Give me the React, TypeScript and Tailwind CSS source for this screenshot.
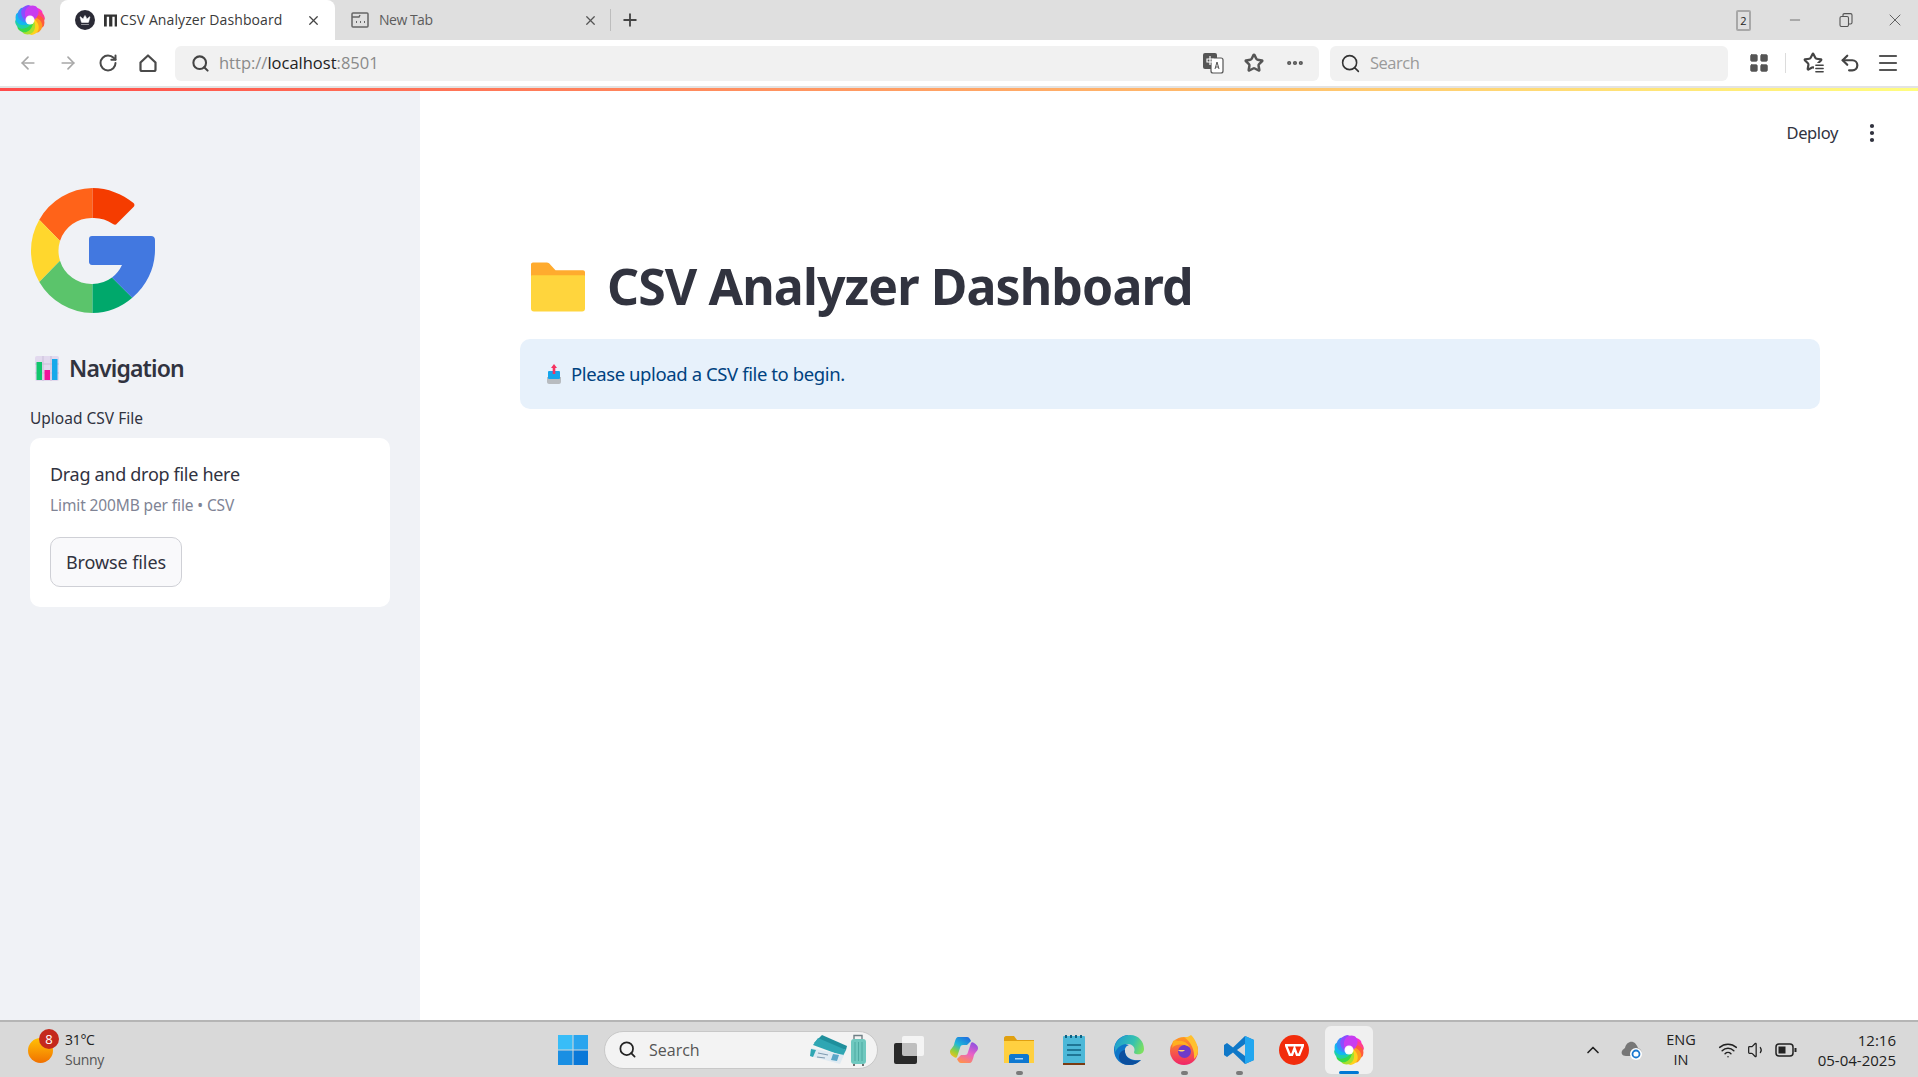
import {
  ArrowLeft,
  ArrowRight,
  ChevronUp,
  Crown,
  Ellipsis,
  EllipsisVertical,
  LayoutGrid,
  Menu,
  Minus,
  Plus,
  RotateCw,
  Search,
  Star,
  Undo2,
  Volume1,
  Wifi,
  X,
} from "lucide-react";

const swirlColors = [
  "#ff2bd0",
  "#ff3f8c",
  "#ff5a3c",
  "#ff9a20",
  "#ffd21c",
  "#a8e02c",
  "#38d94a",
  "#20d0a8",
  "#12b8f0",
  "#3a8cf8",
  "#8a4dff",
  "#c83cf0",
];

function SwirlLogo({ className }: { className: string }) {
  return (
    <svg viewBox="-16 -16 32 32" className={className}>
      {swirlColors.map((color, i) => (
        <path
          key={color}
          d="M-3 -3C-2 -11 6 -16 12 -9C14 -4 10 1 4 2C5 -2 2 -5 -3 -3Z"
          fill={color}
          transform={`rotate(${i * 30})`}
        />
      ))}
      <circle r="4.500" fill="#fff" opacity="0.95" />
    </svg>
  );
}

function GoogleLogo() {
  return (
    <svg viewBox="0 0 125 125" className="w-[125px] h-[125px] block">
      <path d="M62.5 0A62.5 62.5 0 0 0 9.3 31.7L30 53A33 33 0 0 1 62.5 30Z" fill="#ff6319" />
      <path d="M62.5 0C78 0 92 6 103.5 15C105 16.500 104.500 18 103.500 19L87 35.500C86 37 84.500 37 83 36A33 33 0 0 0 62.500 30Z" fill="#f53c00" />
      <path d="M9.300 31.700A62.500 62.500 0 0 0 9.300 94L30 72.700A33 33 0 0 1 30 53Z" fill="#ffd72d" />
      <path d="M9.300 94A62.500 62.500 0 0 0 62.500 125V96A33 33 0 0 1 30 72.700Z" fill="#5bc46b" />
      <path d="M62.500 125A62.500 62.500 0 0 0 102.300 109.700L82 89.500A33 33 0 0 1 62.500 96Z" fill="#00a86b" />
      <path d="M62 48H121C123.500 48 125 49.500 125 52V62.500A62.500 62.500 0 0 1 102.300 109.700L82 89.500A33 33 0 0 0 92 77H62C60 77 59 75.500 59 74V51C59 49 60 48 62 48Z" fill="#4278e0" />
    </svg>
  );
}

function ChartEmoji() {
  return (
    <svg viewBox="0 0 24 25" className="w-6 h-[25px] block">
      <rect x="0" y="0" width="24" height="25" rx="2" fill="#e2d9ee" />
      <path d="M0 8H24M0 17H24M8 0V25M16 0V25" stroke="#c9bfd8" strokeWidth="1" />
      <rect x="1.500" y="6" width="5.500" height="18" fill="#12c66d" />
      <rect x="9.500" y="14" width="5.500" height="10" fill="#f0149a" />
      <rect x="17" y="3" width="5.500" height="21" fill="#16a9ea" />
    </svg>
  );
}

function FolderEmoji() {
  return (
    <svg viewBox="0 0 55 50" className="w-[54px] h-[50px] block">
      <path d="M2 0H16C18 0 19 1 20 2.500L25 8H53C54 8 55 9 55 10V20H0V2C0 1 1 0 2 0Z" fill="#ffab2e" />
      <path d="M0 14C0 13 1 13 2 13H53C54 13 55 13 55 14V47C55 49 54 50 52 50H3C1 50 0 49 0 47Z" fill="#ffd53d" />
    </svg>
  );
}

function InboxEmoji() {
  return (
    <svg viewBox="0 0 16 20" className="w-4 h-5 block">
      <path d="M1 13H15V18C15 19 14 20 13 20H3C2 20 1 19 1 18Z" fill="#b8bcc0" />
      <rect x="2" y="7" width="12" height="8" rx="1" fill="#14a5ec" />
      <path d="M8 0L11 4H9.300V10H6.700V4H5Z" fill="#f5325f" />
    </svg>
  );
}

function TaskIcon({ children, dot, active }: { children: React.ReactNode; dot?: boolean; active?: boolean }) {
  return (
    <div
      className={`relative w-[48px] h-[48px] mr-[7px] flex items-center justify-center rounded-md ${active ? "bg-[#f0f0f0]" : ""}`}
    >
      {children}
      {dot && <div className="absolute bottom-[-1px] w-[7px] h-[4px] rounded-full bg-[#7a7a7a]" />}
      {active && <div className="absolute bottom-0 w-5 h-[3px] rounded-full bg-[#0078d4]" />}
    </div>
  );
}

function TabBar() {
  return (
    <div className="h-10 bg-[#dfdfdf] flex items-center text-[14px] font-['Open_Sans',sans-serif] shrink-0">
      <div className="w-[60px] flex justify-center">
        <SwirlLogo className="w-8 h-8" />
      </div>
      <div className="w-[275px] h-10 bg-white rounded-t-lg flex items-center pl-[15px] pr-[14px] text-[#3a3a3a]">
        <div className="w-5 h-5 rounded-full bg-[#2b2b36] flex items-center justify-center">
          <Crown className="w-3 h-3 text-white" fill="white" strokeWidth={1} />
        </div>
        <svg viewBox="0 0 14 14" className="w-[13px] h-[14px] ml-[9px]">
          <path d="M0 1H14V14H11.500V3.500H9V14H5.500V3.500H3V14H0Z" fill="#333" />
        </svg>
        <span className="ml-[3px] mb-0.5 text-[14px] tracking-[0.1px] whitespace-nowrap">CSV Analyzer Dashboard</span>
        <X className="w-[15px] h-[15px] ml-auto text-[#444]" />
      </div>
      <div className="w-[275px] flex items-center pl-[16px] pr-[12px] text-[#5c5c5c]">
        <svg viewBox="0 0 18 18" className="w-[18px] h-[18px]" fill="none" stroke="#666" strokeWidth="1.500">
          <rect x="1" y="2" width="16" height="14" rx="1" />
          <path d="M1 6H8L9 4" />
          <path d="M5 11H6M9 11H10M13 11H14" strokeWidth="2" />
        </svg>
        <span className="ml-[10px] mb-0.5 tracking-[-0.5px]">New Tab</span>
        <X className="w-[15px] h-[15px] ml-auto text-[#555]" />
      </div>
      <div className="w-px h-[22px] bg-[#bdbdbd]" />
      <Plus className="w-5 h-5 ml-[9px] text-[#444]" strokeWidth={2.2} />
      <div className="ml-auto flex items-center">
        <div className="w-[15px] h-[21px] rounded-[2px] border-2 border-[#a8a8a8] flex items-center justify-center text-[11px] text-[#222] leading-none">
          2
        </div>
        <Minus className="w-4 h-4 ml-[36px] text-[#555]" strokeWidth={1.2} />
        <svg viewBox="0 0 14 14" className="w-[14px] h-[14px] ml-[36px]" fill="none" stroke="#555" strokeWidth="1.100">
          <rect x="1" y="3.500" width="8.500" height="10" rx="1.500" />
          <path d="M4 3.500V2C4 1.200 4.500 .6 5.500 .6H11.500C12.500 .6 13 1.200 13 2V9.500C13 10.500 12.500 11 11.500 11H9.500" />
        </svg>
        <X className="w-5 h-5 ml-[32px] mr-[13px] text-[#555]" strokeWidth={1.1} />
      </div>
    </div>
  );
}

function Toolbar() {
  return (
    <div className="h-[46px] bg-white flex items-center text-[#555] font-['Open_Sans',sans-serif] shrink-0">
      <ArrowLeft className="w-5 h-5 ml-[18px] text-[#a8a8a8]" strokeWidth={2} />
      <ArrowRight className="w-5 h-5 ml-5 text-[#a8a8a8]" strokeWidth={2} />
      <RotateCw className="w-5 h-5 ml-5 text-[#4a4a4a]" strokeWidth={2.4} />
      <svg viewBox="0 0 20 20" className="w-5 h-5 ml-5" fill="none" stroke="#4a4a4a" strokeWidth="2.200" strokeLinejoin="round">
        <path d="M2.500 9.500L10 2.500L17.500 9.500V16.500C17.500 17.500 17 18 16 18H4C3 18 2.500 17.500 2.500 16.500Z" />
      </svg>
      <div className="w-[1144px] h-[35px] ml-[17px] bg-[#f1f1f1] rounded-md flex items-center pl-[16px] pr-[14px]">
        <Search className="w-[19px] h-[19px] text-[#444]" strokeWidth={2.6} />
        <span className="ml-[9px] text-[16.500px] tracking-[0px] text-[#8a8a8a]">
          http://<span className="text-[#222]">localhost</span>:8501
        </span>
        <div className="ml-auto flex items-center">
          <svg viewBox="0 0 22 22" className="w-[22px] h-[22px] ml-[2px]">
            <rect x="1" y="1" width="14" height="16" rx="2" fill="#555" />
            <rect x="9" y="6" width="12" height="15" rx="2" fill="#fff" stroke="#555" strokeWidth="1.200" />
            <path d="M8 4V13M5 7H11V10H5Z" stroke="#fff" strokeWidth="1.200" fill="none" />
            <path d="M13 17L15 10L17 17M13.800 15H16.200" stroke="#555" strokeWidth="1" fill="none" />
          </svg>
          <Star className="w-5 h-5 ml-[20px] text-[#555]" strokeWidth={3} />
          <Ellipsis className="w-5 h-5 ml-[21px] text-[#555]" strokeWidth={3} />
        </div>
      </div>
      <div className="w-[398px] h-[35px] ml-[11px] bg-[#f1f1f1] rounded-md flex items-center pl-[10px]">
        <Search className="w-[21px] h-[21px] text-[#333]" strokeWidth={1.800} />
        <span className="ml-[9px] text-[16.500px] tracking-[-0.5px] text-[#9a9a9a]">Search</span>
      </div>
      <LayoutGrid className="w-[22px] h-[22px] ml-[20px] text-[#555]" fill="#555" strokeWidth={1} />
      <div className="w-px h-[20px] ml-[15px] bg-[#dcdcdc]" />
      <div className="relative ml-[17px] w-[22px] h-[22px]">
        <Star className="w-5 h-5 text-[#444]" strokeWidth={2.6} />
        <Menu className="absolute right-0 bottom-0 w-[11px] h-[11px] text-[#444] bg-white" strokeWidth={3} />
      </div>
      <Undo2 className="w-[22px] h-[22px] ml-[14px] text-[#444]" strokeWidth={2.4} />
      <Menu className="w-6 h-6 ml-[15px] text-[#555]" strokeWidth={2.2} />
    </div>
  );
}

function Sidebar() {
  return (
    <aside className="w-[420px] shrink-0 bg-[#f0f2f6] pl-[30px] pt-[97px] font-['Noto_Sans',sans-serif] text-[#31333f]">
      <GoogleLogo />
      <div className="h-8 mt-[39px] ml-[5px] flex items-center">
        <ChartEmoji />
        <span className="ml-[10px] text-[23px] font-semibold tracking-[-0.85px]">Navigation</span>
      </div>
      <div className="h-6 mt-[22px] leading-6 text-[15.500px] tracking-[0px]">Upload CSV File</div>
      <div className="w-[360px] h-[169px] mt-2 bg-white rounded-[10px] pl-5 pt-6">
        <div className="h-6 leading-6 text-[18px] tracking-[-0.3px]">Drag and drop file here</div>
        <div className="h-5 mt-[9px] leading-5 text-[15.500px] tracking-[-0.12px] text-[#808495]">
          Limit 200MB per file • CSV
        </div>
        <button className="w-[132px] h-[50px] mt-[22px] bg-[#f9f9fb] border border-[#cfd0d6] rounded-[10px] text-[18px] tracking-[-0.1px]">
          Browse files
        </button>
      </div>
    </aside>
  );
}

function MainArea() {
  return (
    <main className="flex-1 min-w-0 bg-white font-['Noto_Sans',sans-serif] text-[#31333f]">
      <div className="h-[84px] flex items-center justify-end pr-[34px]">
        <span className="text-[16.500px] tracking-[-0.4px] mr-[22px]">Deploy</span>
        <EllipsisVertical className="w-6 h-6 text-[#31333f]" strokeWidth={2.2} />
      </div>
      <div className="pl-[100px] pr-[98px]">
        <div className="h-[60px] mt-[82px] flex items-center pl-[11px]">
          <FolderEmoji />
          <h1 className="ml-[22px] mb-0.5 text-[50px] leading-none font-bold tracking-[-0.9px] whitespace-nowrap">
            CSV Analyzer Dashboard
          </h1>
        </div>
        <div className="h-[70px] mt-[22px] bg-[#e7f1fb] rounded-[10px] flex items-center pl-[26px] text-[#004280]">
          <InboxEmoji />
          <span className="ml-[9px] text-[18.500px] tracking-[-0.4px]">Please upload a CSV file to begin.</span>
        </div>
      </div>
    </main>
  );
}

function Taskbar() {
  return (
    <div className="h-[57px] shrink-0 bg-[#d9d9d9] border-t-2 border-[#b5b5b5] flex items-center font-['Open_Sans',sans-serif] text-[#222]">
      <div className="relative w-[558px] h-full flex items-center pl-[28px] shrink-0">
        <div className="w-[25px] h-[25px] rounded-full mt-[2px] bg-linear-to-b from-[#ffc107] to-[#f07000]" />
        <div className="absolute left-[39px] top-[7px] w-5 h-5 rounded-full bg-[#c4281c] text-white text-[13px] leading-5 text-center">
          8
        </div>
        <div className="ml-3 text-[14px] leading-5 tracking-[-0.3px]">
          <div>31°C</div>
          <div className="text-[#555]">Sunny</div>
        </div>
      </div>
      <svg viewBox="0 0 30 30" className="w-[30px] h-[30px] shrink-0">
        <rect x="0" y="0" width="14.500" height="14.500" fill="#38bdf8" />
        <rect x="15.500" y="0" width="14.500" height="14.500" fill="#2aa5ee" />
        <rect x="0" y="15.500" width="14.500" height="14.500" fill="#1a8fe3" />
        <rect x="15.500" y="15.500" width="14.500" height="14.500" fill="#0a78d8" />
      </svg>
      <div className="w-[274px] h-[38px] ml-[16px] bg-[#f3f3f3] rounded-full border border-[#c8c8c8] flex items-center pl-[13px] shrink-0">
        <Search className="w-[19px] h-[19px] text-[#222]" strokeWidth={2.2} />
        <span className="ml-[12px] text-[16px] text-[#555]">Search</span>
        <svg viewBox="0 0 58 32" className="w-[58px] h-8 ml-[110px]">
          <path d="M4 9L12 1L37 12L36 16Z" fill="#1f8f9c" />
          <path d="M3 11L8 4L36 16L33 22Z" fill="#2fa6b3" />
          <path d="M1 14L34 21L30 30L0 22Z" fill="#dfeaf2" />
          <path d="M1 15L6 16L3 23L0 22Z" fill="#2fa6b3" />
          <path d="M23 20L29 21L27 27L21 26Z" fill="#5aa6c8" />
          <path d="M8 19L18 21M7 23L15 24" stroke="#7f9bb0" strokeWidth="1.200" />
          <path d="M44 5V1.500H52V5" fill="none" stroke="#6f7f85" strokeWidth="1.400" />
          <rect x="41" y="5" width="15" height="25" rx="3" fill="#6fc8bf" />
          <path d="M45 8V27M48.500 8V27M52 8V27" stroke="#4eaaa2" strokeWidth="1" />
          <circle cx="44" cy="31" r="1" fill="#444" />
          <circle cx="53" cy="31" r="1" fill="#444" />
        </svg>
      </div>
      <div className="ml-[7px] flex items-center shrink-0">
        <TaskIcon>
          <div className="relative w-[30px] h-[28px]">
            <div className="absolute left-0 bottom-0 w-[23px] h-[21px] rounded-[2px] bg-[#2a2a2a]" />
            <div className="absolute right-0 top-0 w-[22px] h-[20px] rounded-[2px] bg-white/70" />
          </div>
        </TaskIcon>
        <TaskIcon>
          <svg viewBox="0 0 30 28" className="w-[30px] h-[28px]">
            <defs>
              <linearGradient id="copilotLeft" x1="0.8" y1="0" x2="0.2" y2="1">
                <stop offset="0" stopColor="#1f6fe0" />
                <stop offset="0.45" stopColor="#1fb8d8" />
                <stop offset="0.75" stopColor="#8fd03c" />
                <stop offset="1" stopColor="#f0c020" />
              </linearGradient>
              <linearGradient id="copilotRight" x1="0.7" y1="0" x2="0.3" y2="1">
                <stop offset="0" stopColor="#9050e0" />
                <stop offset="0.5" stopColor="#e860c8" />
                <stop offset="1" stopColor="#ff9050" />
              </linearGradient>
            </defs>
            <path d="M9 1H18C20 1 21 3 22 5L18 9H14C12 9 11.500 10 11 12L8 21C7.500 22 6 22 5 21C3 20 1 18 1 16C1 13 3 13 5 9C6 5 7 1 9 1Z" fill="url(#copilotLeft)" />
            <path d="M21 27H12C10 27 9 25 8 23L12 19H16C18 19 18.500 18 19 16L22 7C22.500 6 24 6 25 7C27 8 29 10 29 12C29 15 27 15 25 19C24 23 23 27 21 27Z" fill="url(#copilotRight)" />
          </svg>
        </TaskIcon>
        <TaskIcon dot>
          <svg viewBox="0 0 30 27" className="w-[30px] h-[27px]">
            <path d="M0 2C0 1 1 0 2 0H10L13 4H30V8H0Z" fill="#e0a010" />
            <rect x="0" y="5" width="30" height="22" fill="#ffd040" />
            <path d="M5 20C5 19 6 18 7 18H23C24 18 25 19 25 20V27H5Z" fill="#0f78d0" />
            <rect x="11" y="22" width="8" height="1.500" fill="#a8d4f5" />
          </svg>
        </TaskIcon>
        <TaskIcon>
          <svg viewBox="0 0 22 30" className="w-[22px] h-[30px]">
            <rect x="0" y="1" width="22" height="28" rx="1" fill="#4cb8d8" />
            <rect x="0" y="28" width="22" height="2" fill="#7a3b12" />
            <path d="M4 10H18M4 15H18M4 20H18" stroke="#106080" strokeWidth="1.600" />
            <path d="M3 0V3M8 0V3M13 0V3M18 0V3" stroke="#106080" strokeWidth="2" />
          </svg>
        </TaskIcon>
        <TaskIcon>
          <svg viewBox="0 0 30 30" className="w-[30px] h-[30px]">
            <defs>
              <linearGradient id="edgeTop" x1="0" y1="0.3" x2="1" y2="0.6">
                <stop offset="0" stopColor="#1f9ed0" />
                <stop offset="0.6" stopColor="#35c1b0" />
                <stop offset="1" stopColor="#7de060" />
              </linearGradient>
            </defs>
            <path d="M15 0C6 0 0 7 0 15C0 24 7 30 15 30C20 30 24 28 27 25C20 26 12 24 11 17C10.500 13 12 11 15 10C9 8 5 7 2 9L15 0Z" fill="#0f76c8" />
            <path d="M1 10C4 3 10 0 16 0C25 0 30 7 30 14C30 18.500 26 20 22 19C19.500 18.500 20 17 20.500 15.500C21 12 18 9 14 9C9 9 5 10 1 17Z" fill="url(#edgeTop)" />
            <path d="M11 15C10 22 17 27.500 27 25C24 28 20 30 15 30C9 30 5 27 5 22C5 18 8 15 11 15Z" fill="#0b4f9e" />
          </svg>
        </TaskIcon>
        <TaskIcon dot>
          <svg viewBox="0 0 28 30" className="w-[28px] h-[30px]">
            <defs>
              <linearGradient id="foxBody" x1="0.5" y1="0" x2="0.5" y2="1">
                <stop offset="0" stopColor="#ff9a1f" />
                <stop offset="1" stopColor="#f0246a" />
              </linearGradient>
            </defs>
            <circle cx="14" cy="16" r="14" fill="url(#foxBody)" />
            <path d="M14 2C17 3 19 1 21 0C25 4 28 10 28 16C28 20 26 22 24 24C25 15 21 7 14 2Z" fill="#ffc02e" />
            <circle cx="14.500" cy="16.500" r="6.500" fill="#6e3bc9" />
            <path d="M3 6C2 9 3 11 2 13C5 9 12 8 20 12C17 7 12 5 8 6C6 5 4 5 3 6Z" fill="#ffb020" />
            <path d="M8 15H15C13 17 10 17 8 15Z" fill="#ffd36a" />
          </svg>
        </TaskIcon>
        <TaskIcon dot>
          <svg viewBox="0 0 30 30" className="w-[30px] h-[30px]">
            <path d="M21 1L30 5V25L21 29L9 17.500L3 22L0 20V10L3 8L9 12.500Z" fill="#0f78c8" />
            <path d="M21 1L30 5V25L21 29Z" fill="#22a7f0" />
            <path d="M21 9L13 15L21 21Z" fill="#d9d9d9" />
          </svg>
        </TaskIcon>
        <TaskIcon>
          <div className="w-[30px] h-[30px] rounded-full bg-[#f22c0c] flex items-center justify-center">
            <svg viewBox="0 0 20 14" className="w-[19px] h-[14px]" fill="none" stroke="white" strokeWidth="2.400">
              <path d="M1 2H19L15 12H12.500L10 5L7.500 12H5Z" />
            </svg>
          </div>
        </TaskIcon>
        <TaskIcon active>
          <SwirlLogo className="w-8 h-8" />
        </TaskIcon>
      </div>
      <div className="ml-auto flex items-center pr-[22px] text-[14px] text-[#222]">
        <ChevronUp className="w-5 h-5" strokeWidth={2} />
        <svg viewBox="0 0 22 20" className="w-[22px] h-5 ml-[18px]">
          <path d="M5 16C1 16 0 13 1 11C2 9 3 9 4 8C5 3 9 1 12 2C15 3 16 6 17 8C20 9 21 11 20 13L18 16Z" fill="#777" />
          <circle cx="15" cy="14" r="6" fill="#fff" />
          <circle cx="15" cy="14" r="3.500" fill="none" stroke="#1a78d0" strokeWidth="1.800" />
        </svg>
        <div className="ml-[18px] w-[40px] text-center leading-5 text-[14.500px]">
          <div>ENG</div>
          <div>IN</div>
        </div>
        <Wifi className="w-5 h-5 ml-[17px]" strokeWidth={1.8} />
        <Volume1 className="w-5 h-5 ml-[9px]" strokeWidth={1.5} />
        <svg viewBox="0 0 22 14" className="w-[22px] h-[14px] ml-[8px]" fill="none" stroke="#222" strokeWidth="1.500">
          <rect x="1" y="1" width="17" height="12" rx="3" />
          <rect x="3.500" y="3.500" width="7" height="7" fill="#222" stroke="none" />
          <path d="M20.500 5V9" strokeWidth="2" />
        </svg>
        <div className="ml-[17px] w-[82px] text-right leading-5 text-[15px]">
          <div>12:16</div>
          <div className="whitespace-nowrap">05-04-2025</div>
        </div>
      </div>
    </div>
  );
}

export default function App() {
  return (
    <div className="h-screen w-full overflow-hidden flex flex-col bg-white">
      <TabBar />
      <Toolbar />
      <div className="h-0.5 bg-[#e3e3e3] shrink-0" />
      <div className="h-[3px] bg-[linear-gradient(90deg,#ff4b4b,#fffd80)] shrink-0" />
      <div className="flex-1 min-h-0 flex">
        <Sidebar />
        <MainArea />
      </div>
      <Taskbar />
    </div>
  );
}
